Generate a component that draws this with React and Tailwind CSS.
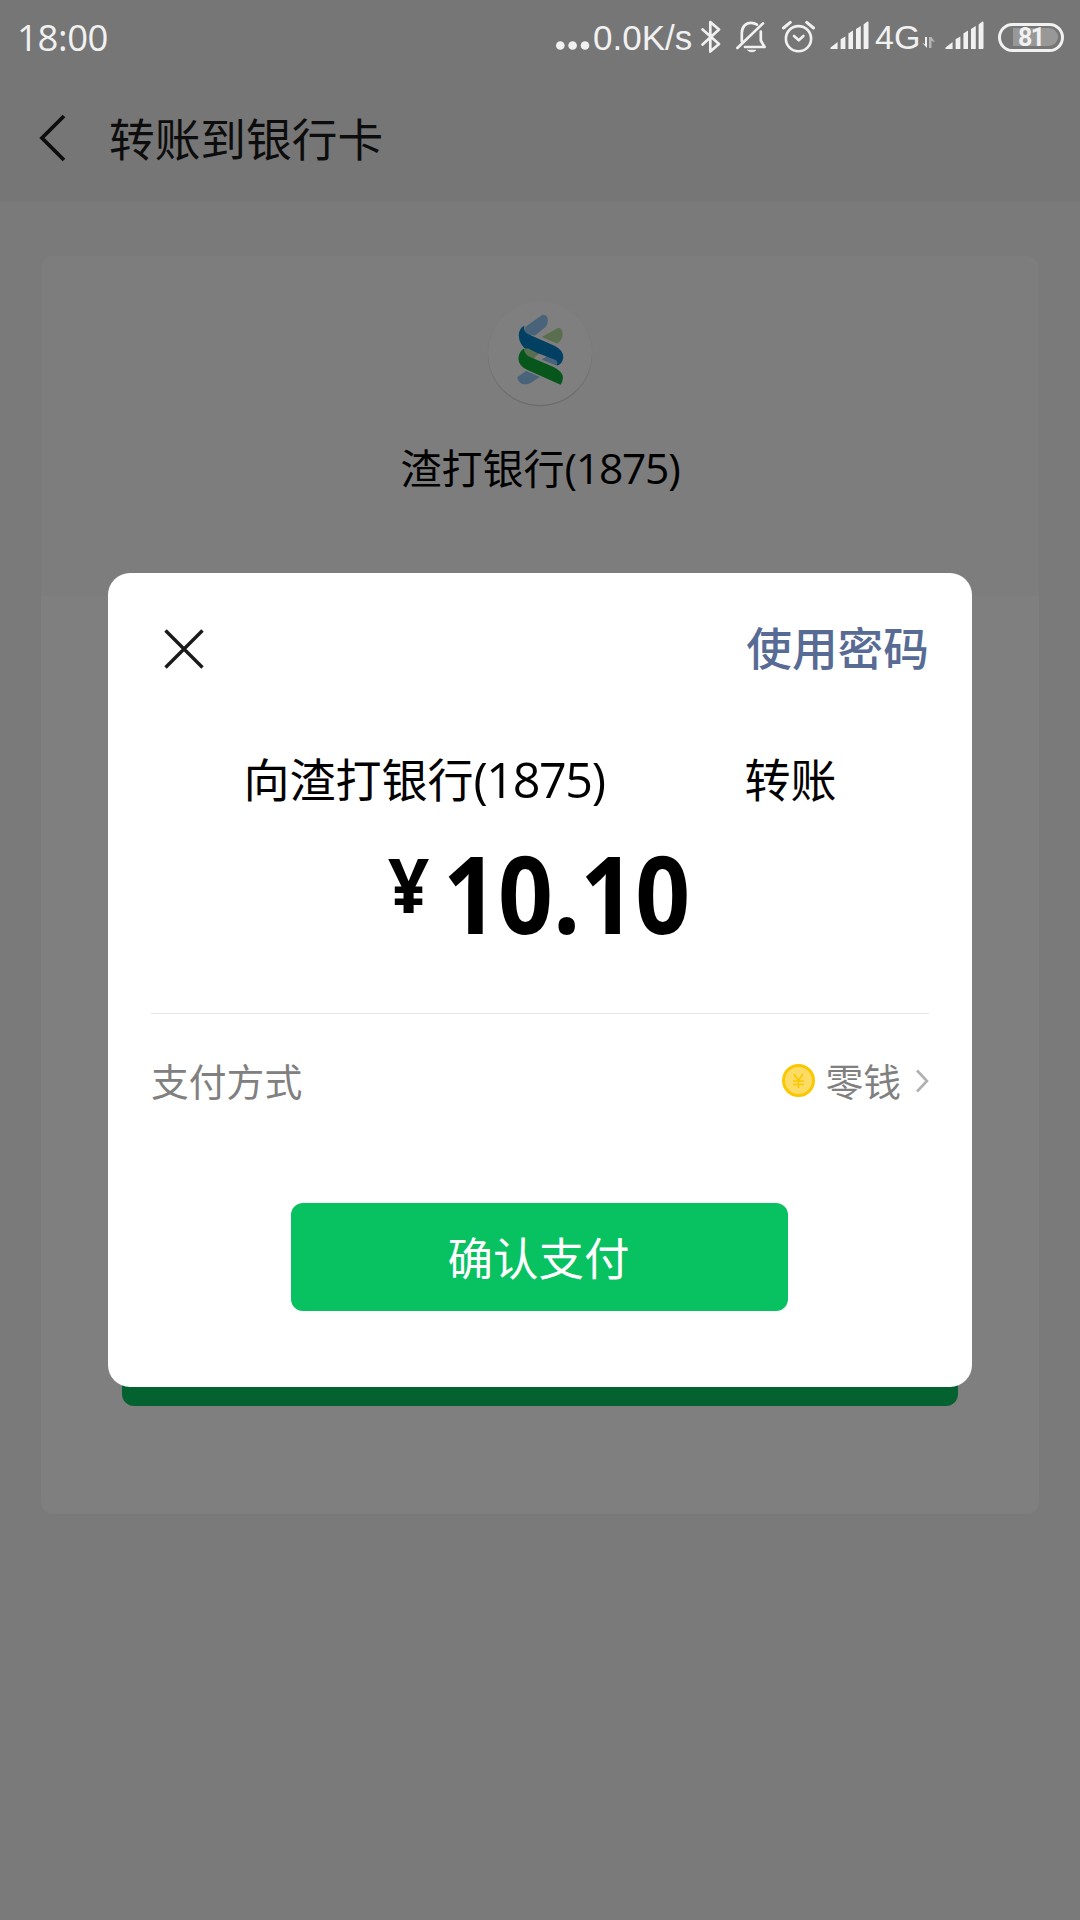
import React from 'react';

const DotsIcon = () => (
    <svg width="34" height="36" viewBox="0 0 34 36" fill="currentColor">
        <circle cx="4.3" cy="26.5" r="4.3" />
        <circle cx="16.6" cy="26.5" r="4.3" />
        <circle cx="29" cy="26.5" r="4.3" />
    </svg>
);

const BluetoothIcon = () => (
    <svg width="20" height="36" viewBox="0 0 20 36" fill="none" stroke="currentColor" strokeWidth="2.7" strokeLinejoin="round" strokeLinecap="round">
        <path d="M1.6 10.5 L18 25 L9.3 32.5 V3 L18 10.5 L1.6 25.5" />
    </svg>
);

const MutedBellIcon = () => (
    <svg width="31" height="36" viewBox="0 0 31 36" fill="none" stroke="currentColor" strokeWidth="2.7" strokeLinecap="round" strokeLinejoin="round">
        <path d="M1.4 29 L27 4.4" />
        <path d="M5.8 22.5 V14 C5.8 7.5 10 3.8 15 3.8 C17.6 3.8 19.5 4.6 21 5.6" />
        <path d="M24.8 12.5 V21.5 L28.6 28 H9" />
        <path d="M11.6 31 H20 C19 33.6 12.6 33.6 11.6 31 Z" fill="currentColor" strokeWidth="0.5" />
    </svg>
);

const AlarmIcon = () => (
    <svg width="33" height="36" viewBox="0 0 33 36" fill="none" stroke="currentColor" strokeWidth="2.6" strokeLinecap="round" strokeLinejoin="round">
        <circle cx="16.5" cy="19.7" r="12.6" />
        <path d="M1.5 9 L8.3 3.4 M31.5 9 L24.7 3.4" strokeWidth="3" />
        <path d="M12 17 L16.8 21.3 L21.4 17" />
    </svg>
);

const SignalIcon = () => (
    <svg width="39" height="36" viewBox="0 0 39 36" fill="currentColor">
        <path d="M0.5 30 Q0 28.6 1.2 28 L7.6 23 V30 Z" />
        <path d="M10.6 30 V20.3 L15.4 17.4 V30 Z" />
        <path d="M18.4 30 V14.4 L23 11.6 V30 Z" />
        <path d="M26 30 V10 L30.8 7 V30 Z" />
        <path d="M33.6 30 V5.6 L37 2.8 Q38.5 2.2 38.5 3.6 V29 Q38.5 30 37.5 30 Z" />
    </svg>
);

const DataArrowsIcon = () => (
    <svg width="13" height="36" viewBox="0 0 13 36" fill="currentColor">
        <path d="M0 23.5 L3 25.5 V18 H5 V29 Z" />
        <path d="M7 29 V18 H9.5 L13 23 L9.5 22 V29 Z" opacity="0.5" />
    </svg>
);

const BankLogo = () => (
    <svg className="mb-[7px]" width="47" height="71" viewBox="413 104 140 212">
        <path d="M437 143 L489 106 Q504 106 505 122 Q505 136 498 143 L467 168 L437 165 Z" fill="#48637a" />
        <path d="M487 173 L536 145 Q548 146 549 165 Q548 184 532 192 Z" fill="#596f4f" />
        <path d="M434 207 L478 228 L462 236 L436 226 Z" fill="#596f4f" />
        <path d="M487 240 L503 232 L538 246 L531 258 Z" fill="#48637a" />
        <path d="M414 292 L440 274 L481 292 L452 311 Q440 316 427 312 Q414 305 414 292 Z" fill="#48637a" />
        <path d="M434 139 Q433 157 445 164 L523 198 Q552 212 551 234 Q549 252 534 258 L446 214 Q418 196 418 166 Q420 146 434 139 Z" fill="#024063" />
        <path d="M434 207 Q434 222 447 230 L522 262 Q550 276 550 294 Q549 308 543 315 L446 272 Q417 260 417 236 Q419 215 434 207 Z" fill="#07571d" />
        <path d="M436 207 L446 207 L478 223 L466 234 L447 228 Q438 220 436 207 Z" fill="#596f4f" />
        <path d="M466 233 L478 222 L503 232 L487 240 Z" fill="#7f7f7f" />
        <path d="M487 240 L503 232 L528 241 Q537 247 531 257 Z" fill="#48637a" />
    </svg>
);

const StatusBar = () => (
    <div className="flex h-[74px] items-center justify-between pl-[17px] pr-4 text-[#f1f1f1]">
        <span className="font-['Open_Sans'] text-[36.5px] leading-none tracking-[-0.4px]">18:00</span>
        <div className="flex items-center">
            <DotsIcon />
            <span className="ml-[3px] w-[108px] whitespace-nowrap font-['Liberation_Sans'] text-[35px] leading-none">0.0K/s</span>
            <BluetoothIcon />
            <span className="ml-[15px]"><MutedBellIcon /></span>
            <span className="ml-[15px]"><AlarmIcon /></span>
            <span className="ml-[15px]"><SignalIcon /></span>
            <span className="ml-[6px] w-[47px] font-['Liberation_Sans'] text-[34px] leading-none">4G</span>
            <span className="mr-[10px]"><DataArrowsIcon /></span>
            <SignalIcon />
            <div className="ml-[14px] flex h-[29px] w-[66px] items-center rounded-full border-[3px] border-[#f1f1f1] px-[3px]">
                <div className="ml-[9px] flex h-[18px] w-[45px] items-center rounded-r-full bg-[#989898] pl-[5px]">
                    <span className="text-[25px] font-bold leading-none tracking-[-1.5px]">81</span>
                </div>
            </div>
        </div>
    </div>
);

const NavBar = () => (
    <div className="flex h-32 items-center pl-[39px] text-[#0d0d0d]">
        <svg width="28" height="48" viewBox="0 0 28 48" fill="none" stroke="currentColor" strokeWidth="3.8">
            <path d="M25 2 L3 24 L25 46" />
        </svg>
        <h1 className="ml-[42px] pt-[7px] text-[45.7px] leading-none">转账到银行卡</h1>
    </div>
);

const TransferCard = () => (
    <div className="mx-[41px] mt-[54px] flex h-[1258px] flex-col overflow-hidden rounded-xl bg-[#7f7f7f]">
        <div className="flex h-[340px] flex-col items-center bg-[#7d7d7d] pt-[45px]">
            <div className="flex h-[104px] w-[104px] items-center justify-center rounded-full bg-[#7f7f7f] shadow-[0_1px_1px_rgba(0,0,0,0.18)]">
                <BankLogo />
            </div>
            <p className="mt-[38px] flex h-[54px] items-center text-[41px] leading-none text-black">
                渣打银行<span className="pb-[4px] font-['Open_Sans'] text-[42.5px] tracking-[-1.2px]">(1875)</span>
            </p>
        </div>
        <div className="mx-[81px] mb-[108px] mt-auto h-[120px] rounded-xl bg-[#046130]" />
    </div>
);

const PaymentDialog = () => (
    <div className="flex h-[814px] w-[864px] flex-col rounded-[22px] bg-white px-[43px] text-black">
        <div className="flex h-[152px] items-center justify-between">
            <svg className="ml-3" width="42" height="42" viewBox="0 0 42 42" fill="none" stroke="#1a1a1a" strokeWidth="3.4">
                <path d="M2.5 2.5 L39.5 39.5 M39.5 2.5 L2.5 39.5" />
            </svg>
            <button className="pt-[3px] text-[45.7px] font-medium leading-none text-[#576b95]">使用密码</button>
        </div>

        <div className="flex h-28 items-center justify-center text-[46px] leading-none">
            <span>向渣打银行</span>
            <span className="pb-[3px] font-['Open_Sans'] text-[48.5px] tracking-[-1.4px]">(1875)</span>
            <span className="ml-[140px]">转账</span>
        </div>

        <div className="flex h-[177px] justify-center border-b border-[#e5e5e5] font-['Open_Sans']">
            <span className="mt-2 origin-left scale-x-[0.95] text-[76px] font-bold leading-[77px]">¥</span>
            <span className="-mr-[29px] ml-3 mt-[2px] origin-left scale-x-[0.89] text-[108px] font-[680] leading-[108px]">10.10</span>
        </div>

        <div className="flex h-[134px] items-center text-[37.8px] leading-none text-[#808080]">
            <span className="pt-[5px]">支付方式</span>
            <svg className="mb-[2px] ml-auto" width="33" height="33" viewBox="0 0 33 33" fill="none">
                <circle cx="16.5" cy="16.5" r="15" fill="#fddc66" stroke="#fac800" strokeWidth="3" />
                <path d="M12 10 L16.5 16.5 L21 10 M16.5 16.5 V24 M11 17 H22 M11 20.5 H22" stroke="#fac800" strokeWidth="1.6" />
            </svg>
            <span className="ml-[10px] pt-[5px]">零钱</span>
            <svg className="ml-[14px]" width="14" height="26" viewBox="0 0 14 26" fill="none" stroke="#b0b0b0" strokeWidth="2.6">
                <path d="M2 2.5 L12 13 L2 23.5" />
            </svg>
        </div>

        <button className="mr-px mt-[55px] h-[108px] w-[497px] self-center rounded-xl bg-[#08c161] pr-[2px] pt-2 text-[45.5px] leading-none text-white">
            确认支付
        </button>
    </div>
);

const App = () => {
    return (
        <div className="relative h-[1920px] w-[1080px] overflow-hidden bg-[#7a7a7a] font-[Roboto,'Noto_Sans_CJK_SC',sans-serif]">
            <header className="h-[202px] bg-[#767676]">
                <StatusBar />
                <NavBar />
            </header>
            <TransferCard />

            {/* Payment confirmation */}
            <div className="absolute inset-0 flex justify-center pt-[573px]">
                <PaymentDialog />
            </div>
        </div>
    );
};

export default App;
